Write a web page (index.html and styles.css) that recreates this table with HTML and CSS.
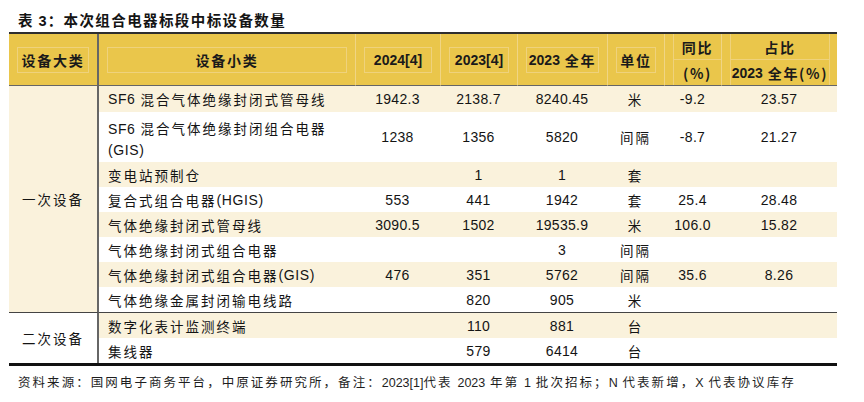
FILE: index.html
```html
<!DOCTYPE html>
<html lang="zh-CN">
<head>
<meta charset="utf-8">
<title>表 3：本次组合电器标段中标设备数量</title>
<link rel="stylesheet" href="styles.css">
</head>
<body>
<div class="title">表 <span class="n">3</span>：本次组合电器标段中标设备数量</div>
<div class="table">
  <div class="h h1"><div class="box">设备大类</div></div>
  <div class="h"><div class="box">设备小类</div></div>
  <div class="h s"><div class="box num">2024[4]</div></div>
  <div class="h s"><div class="box num">2023[4]</div></div>
  <div class="h s"><div class="box"><span class="num">2023</span>&nbsp;全年</div></div>
  <div class="h s"><div class="box">单位</div></div>
  <div class="h s two"><div class="top">同比</div><div class="bot">(%)</div></div>
  <div class="h s two wide"><div class="top">占比</div><div class="bot"><span class="num">2023</span>&nbsp;全年(%)</div></div>

  <div class="g g1">一次设备</div>

  <div class="c l a"><span class="n">SF6</span>&nbsp;混合气体绝缘封闭式管母线</div>
  <div class="c num a">1942.3</div>
  <div class="c num a">2138.7</div>
  <div class="c num a">8240.45</div>
  <div class="c a">米</div>
  <div class="c num a">-9.2</div>
  <div class="c num a">23.57</div>

  <div class="c l b"><div class="ml"><span class="n">SF6</span>&nbsp;混合气体绝缘封闭组合电器<br><span class="n">(GIS)</span></div></div>
  <div class="c num b">1238</div>
  <div class="c num b">1356</div>
  <div class="c num b">5820</div>
  <div class="c b">间隔</div>
  <div class="c num b">-8.7</div>
  <div class="c num b">21.27</div>

  <div class="c l a">变电站预制仓</div>
  <div class="c num a"></div>
  <div class="c num a">1</div>
  <div class="c num a">1</div>
  <div class="c a">套</div>
  <div class="c num a"></div>
  <div class="c num a"></div>

  <div class="c l b">复合式组合电器<span class="n">(HGIS)</span></div>
  <div class="c num b">553</div>
  <div class="c num b">441</div>
  <div class="c num b">1942</div>
  <div class="c b">套</div>
  <div class="c num b">25.4</div>
  <div class="c num b">28.48</div>

  <div class="c l a">气体绝缘封闭式管母线</div>
  <div class="c num a">3090.5</div>
  <div class="c num a">1502</div>
  <div class="c num a">19535.9</div>
  <div class="c a">米</div>
  <div class="c num a">106.0</div>
  <div class="c num a">15.82</div>

  <div class="c l b">气体绝缘封闭式组合电器</div>
  <div class="c num b"></div>
  <div class="c num b"></div>
  <div class="c num b">3</div>
  <div class="c b">间隔</div>
  <div class="c num b"></div>
  <div class="c num b"></div>

  <div class="c l a">气体绝缘封闭式组合电器<span class="n">(GIS)</span></div>
  <div class="c num a">476</div>
  <div class="c num a">351</div>
  <div class="c num a">5762</div>
  <div class="c a">间隔</div>
  <div class="c num a">35.6</div>
  <div class="c num a">8.26</div>

  <div class="c l b">气体绝缘金属封闭输电线路</div>
  <div class="c num b"></div>
  <div class="c num b">820</div>
  <div class="c num b">905</div>
  <div class="c b">米</div>
  <div class="c num b"></div>
  <div class="c num b"></div>

  <div class="g g2">二次设备</div>

  <div class="c l a t">数字化表计监测终端</div>
  <div class="c num a t"></div>
  <div class="c num a t">110</div>
  <div class="c num a t">881</div>
  <div class="c a t">台</div>
  <div class="c num a t"></div>
  <div class="c num a t"></div>

  <div class="c l b">集线器</div>
  <div class="c num b"></div>
  <div class="c num b">579</div>
  <div class="c num b">6414</div>
  <div class="c b">台</div>
  <div class="c num b"></div>
  <div class="c num b"></div>
</div>
<div class="note">资料来源：国网电子商务平台，中原证券研究所，备注：<span class="n">2023[1]</span>代表 <span class="n">2023</span> 年第 <span class="n">1</span> 批次招标；<span class="n">N</span> 代表新增，<span class="n">X</span> 代表协议库存</div>
</body>
</html>
```

FILE: styles.css
```css
* { box-sizing: border-box; }

body {
  margin: 0;
  background: #ffffff;
  color: #141414;
  font-family: "Noto Sans CJK SC", "Liberation Sans", sans-serif;
}

.title {
  height: 32px;
  padding: 10px 0 0 18px;
  font-size: 14.5px;
  line-height: 20px;
  font-weight: 700;
  letter-spacing: 1.4px;
}

.title .n {
  font-family: "Liberation Sans", sans-serif;
  letter-spacing: 0;
  margin-right: 1px;
}

.table {
  margin-left: 9px;
  width: 828px;
  display: grid;
  grid-template-columns: 90px 256px 85px 77px 90px 57px 57px 116px;
  grid-template-rows: 52px 26px 50px repeat(6, 25px) 26px 25px;
  border-top: 2px solid #2e2e2e;
  border-bottom: 3px solid #111111;
}

/* header */
.h {
  background: #eac64b;
  border-bottom: 1px solid #666666;
  font-weight: 700;
  font-size: 14px;
  letter-spacing: 1.7px;
  display: flex;
  align-items: center;
  color: #1a1a1a;
}

.h1 { border-right: 2px solid #666666; }
.h.s { border-left: 1px solid #f0d584; }

.box {
  flex: 1;
  height: 26px;
  margin: 0 8px;
  border: 1px solid #efd27c;
  display: flex;
  align-items: center;
  justify-content: center;
}

.num {
  font-family: "Liberation Sans", sans-serif;
  letter-spacing: 0;
}

.h .num { font-size: 14px; letter-spacing: 0; }

.h.two {
  flex-direction: column;
  align-items: stretch;
}

.h.two .top,
.h.two .bot {
  display: flex;
  align-items: center;
  justify-content: center;
}

.h.two .top {
  height: 26px;
  margin-left: 8px;
  border-left: 1px solid #efd27c;
  border-bottom: 1px solid #efd27c;
}

.h.two .bot {
  height: 25px;
  margin-left: 8px;
  border-left: 1px solid #efd27c;
}

.h.two.wide .top,
.h.two.wide .bot {
  margin-right: 7px;
  border-right: 1px solid #efd27c;
}

/* group column */
.g {
  display: flex;
  align-items: center;
  justify-content: center;
  font-size: 13.5px;
  letter-spacing: 2px;
  border-right: 2px solid #666666;
}

.g1 {
  grid-column: 1;
  grid-row: 2 / span 8;
  background: #faf2dc;
}

.g2 {
  grid-column: 1;
  grid-row: 10 / span 2;
  background: #ffffff;
  border-top: 1px solid #444444;
}

/* body cells */
.c {
  display: flex;
  align-items: center;
  justify-content: center;
  font-size: 13.5px;
  letter-spacing: 2px;
  white-space: nowrap;
}

.c.l {
  justify-content: flex-start;
  padding-left: 9px;
}

.c.num {
  font-size: 14px;
  letter-spacing: 0.3px;
}

.c .n {
  font-family: "Liberation Sans", sans-serif;
  font-size: 14px;
  letter-spacing: 0.6px;
}

.ml { line-height: 20px; padding-top: 4px; }

.a { background: #faf2dc; }
.b { background: #ffffff; }
.t { border-top: 1px solid #444444; }

.note {
  margin-top: 6px;
  padding-left: 18px;
  font-size: 12.5px;
  line-height: 20px;
  letter-spacing: 2.05px;
  color: #1e1e1e;
  white-space: nowrap;
}

.note .n {
  font-family: "Liberation Sans", sans-serif;
  letter-spacing: 0;
}
```
